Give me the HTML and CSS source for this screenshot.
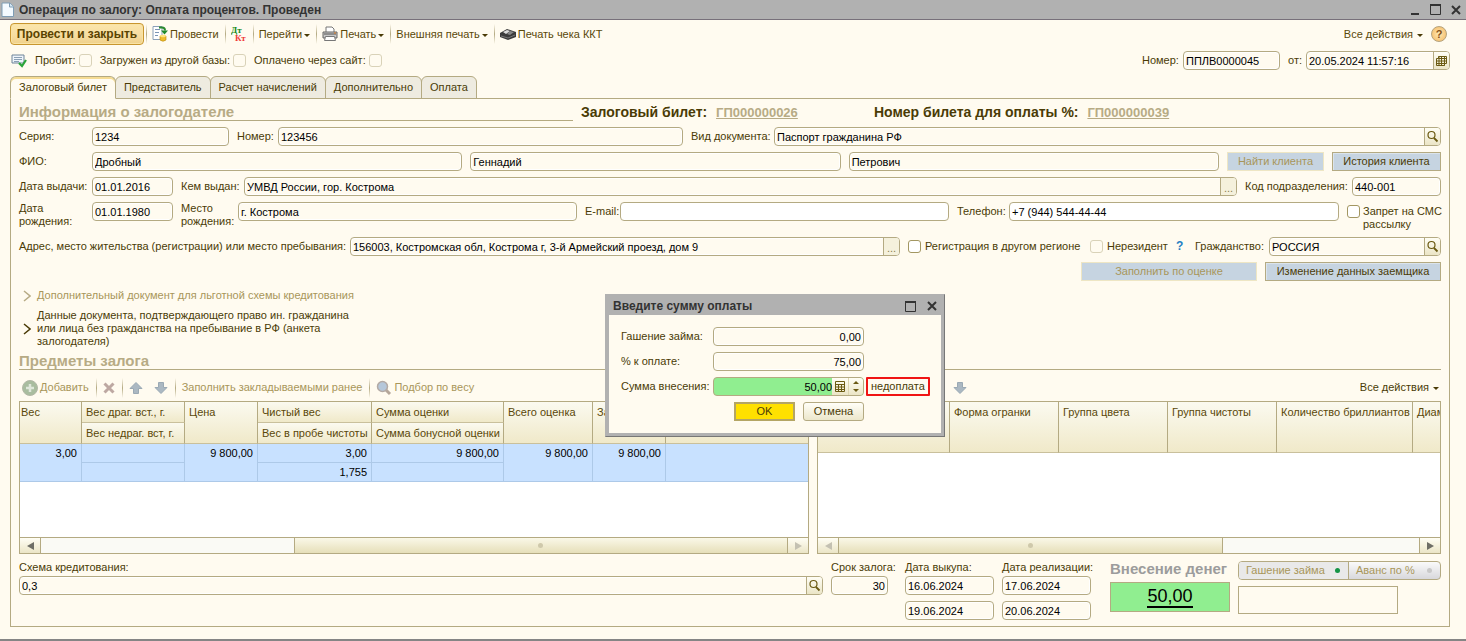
FILE: index.html
```html
<!DOCTYPE html>
<html lang="ru">
<head>
<meta charset="utf-8">
<title>Операция по залогу</title>
<link rel="stylesheet" href="styles.css">
</head>
<body>
<svg class="defs" aria-hidden="true">
  <symbol id="i-lens" viewBox="0 0 13 13"><circle cx="5.500" cy="5" r="3.500" fill="none" stroke="#6b5a12" stroke-width="1.200"/><path d="M8 8l3.500 3.500" stroke="#6b5a12" stroke-width="1.800"/></symbol>
  <symbol id="i-down" viewBox="0 0 14 14"><path d="M4.500 1.500h5v5h3.500L7 12.500 1 6.500h3.500z" fill="#abb8c2" stroke="#9aa9b4"/></symbol>
  <symbol id="i-close" viewBox="0 0 10 10"><path d="M1 1l8 8M9 1L1 9" stroke="#333" stroke-width="2"/></symbol>
  <symbol id="i-max" viewBox="0 0 11 11"><path d="M.5 1h10v9.500H.5z" fill="none" stroke="#333"/><path d="M0 1h11" stroke="#333" stroke-width="2"/></symbol>
</svg>
<div class="window">
  <header class="titlebar">
    <svg width="13" height="15" viewBox="0 0 13 15"><path d="M1 1h8l3.500 3.500V14.500H1z" fill="#f4faff" stroke="#7f9db5"/><path d="M8.500 1v4h4" fill="#d5e6f2" stroke="#7f9db5"/></svg>
    <h1>Операция по залогу: Оплата процентов. Проведен</h1>
    <div class="winbuttons">
      <button aria-label="Свернуть"><svg width="9" height="10"><path d="M0 9h8" stroke="#333" stroke-width="2"/></svg></button>
      <button aria-label="Развернуть"><svg width="11" height="11"><use href="#i-max"/></svg></button>
      <button aria-label="Закрыть"><svg width="10" height="10"><use href="#i-close"/></svg></button>
    </div>
  </header>

  <div class="toolbar">
    <button class="primary">Провести и закрыть</button>
    <i class="sep"></i>
    <button class="tool"><svg width="16" height="16" viewBox="0 0 16 16"><path d="M1 .5h9v13H1z" fill="#fff" stroke="#8aa0b8"/><path d="M3 3.500h5M3 6.500h4M3 9.500h3" stroke="#7a94b4"/><path d="M7 1.500h3q3 0 3 3" fill="none" stroke="#2b8a2f" stroke-width="2"/><path d="M9 4.500h7l-3.500 4z" fill="#1f8a2b"/><path d="M8 10v4q3 2.500 6 0v-4z" fill="#eebd2c" stroke="#b8870b" stroke-width=".6"/><ellipse cx="11" cy="10" rx="3" ry="1.200" fill="#ffe27a"/></svg>Провести</button>
    <i class="sep"></i>
    <button class="tool" aria-label="Движения документа"><svg width="16" height="16" viewBox="0 0 16 16"><text x="0" y="7" class="dt">Дт</text><text x="4" y="15" class="kt">Кт</text></svg></button>
    <i class="sep"></i>
    <button class="tool">Перейти<i class="caret"></i></button>
    <i class="sep"></i>
    <button class="tool"><svg width="16" height="16" viewBox="0 0 16 16"><path d="M4 6V1h6l2 2v3" fill="#fff" stroke="#777"/><path d="M1 6h14v6H1z" fill="#c8c8c8" stroke="#666"/><path d="M2 8h12" stroke="#555"/><path d="M3.500 10.500h9l1 4h-11z" fill="#fff" stroke="#777"/><path d="M12 7h2" stroke="#e07a20"/></svg>Печать<i class="caret"></i></button>
    <i class="sep"></i>
    <button class="tool">Внешняя печать<i class="caret"></i></button>
    <i class="sep"></i>
    <button class="tool"><svg width="16" height="16" viewBox="0 0 16 16"><path d="M0 7l7-4 9 3v5l-8 3-8-3z" fill="#3b3b3b"/><path d="M3 6l4-2 3 1-4 3z" fill="#ddd"/><path d="M10 5l4 1-4 3-3-1z" fill="#888"/><path d="M1 10l7 2 7-3" stroke="#777" fill="none"/></svg>Печать чека ККТ</button>
    <div class="end">
      <button class="tool">Все действия<i class="caret"></i></button>
      <button class="help" aria-label="Справка">?</button>
    </div>
  </div>

  <div class="statusrow">
    <svg width="16" height="14" viewBox="0 0 16 14"><path d="M1 1h12v8H1z" fill="#eef4fa" stroke="#6f8499"/><path d="M3 3.500h8M3 5.500h8M3 7.500h5" stroke="#8ba0b5"/><path d="M8 9l3 3 4-6" fill="none" stroke="#2ba53a" stroke-width="2.200"/></svg>
    <label>Пробит: <input type="checkbox" disabled></label>
    <label>Загружен из другой базы: <input type="checkbox" disabled></label>
    <label>Оплачено через сайт: <input type="checkbox" disabled></label>
    <div class="end">
      <label for="docnum" class="w-docnum">Номер:</label><input class="box w-num" id="docnum" value="ППЛВ0000045">
      <label for="docdate" class="w-from">от:</label>
      <span class="box combo w-date"><input id="docdate" value="20.05.2024 11:57:16"><button aria-label="Календарь"><svg width="11" height="12" viewBox="0 0 11 12"><path d="M2.500 1.500h8v7h-2v2h-8v-7h2zM.5 6h10M.5 8.500h8M3 1.500v9M5.500 1.500v9M8.500 1.500v9M2.500 3.500h8" fill="none" stroke="#6b5a12"/></svg></button></span>
    </div>
  </div>

  <nav class="tabs" role="tablist">
    <button role="tab" class="on" aria-selected="true">Залоговый билет</button>
    <button role="tab">Представитель</button>
    <button role="tab">Расчет начислений</button>
    <button role="tab">Дополнительно</button>
    <button role="tab">Оплата</button>
  </nav>

  <main class="panel">
    <div class="heads">
      <h2 class="section">Информация о залогодателе</h2>
      <p class="ticket">Залоговый билет: <a href="#t26">ГП000000026</a></p>
      <p class="ticket pay">Номер билета для оплаты %: <a href="#t39">ГП000000039</a></p>
    </div>

    <div class="form">
      <div class="row">
        <div class="pair"><label for="f1" class="l-first">Серия:</label><input id="f1" class="box w-series" value="1234"></div>
        <div class="pair g5"><label for="f2" class="l-num">Номер:</label><input id="f2" class="box" value="123456"></div>
        <div class="pair g8"><label for="f3" class="l-kind">Вид документа:</label><span class="box combo"><input id="f3" value="Паспорт гражданина РФ"><button aria-label="Выбрать"><svg width="13" height="13"><use href="#i-lens"/></svg></button></span></div>
      </div>
      <div class="row">
        <div class="pair grow"><label for="f4" class="l-first">ФИО:</label><div class="trio"><input id="f4" class="box" value="Дробный"><input class="box" aria-label="Имя" value="Геннадий"><input class="box" aria-label="Отчество" value="Петрович"></div></div>
        <button class="flat w-find" disabled>Найти клиента</button>
        <button class="flat w-hist">История клиента</button>
      </div>
      <div class="row">
        <div class="pair"><label for="f5" class="l-first">Дата выдачи:</label><input id="f5" class="box w-day" value="01.01.2016"></div>
        <div class="pair grow"><label for="f6" class="l-issued">Кем выдан:</label><span class="box combo"><input id="f6" value="УМВД России, гор. Кострома"><button class="dots" aria-label="Выбрать">...</button></span></div>
        <div class="pair"><label for="f7" class="l-code">Код подразделения:</label><input id="f7" class="box w-code" value="440-001"></div>
      </div>
      <div class="row two">
        <div class="pair"><label for="f8" class="l-first">Дата<br>рождения:</label><input id="f8" class="box w-day" value="01.01.1980"></div>
        <div class="pair g4"><label for="f9" class="l-place">Место<br>рождения:</label><input id="f9" class="box" value="г. Кострома"></div>
        <div class="pair g4"><label for="f10" class="l-mail">E-mail:</label><input id="f10" class="box white" type="email"></div>
        <div class="pair g4"><label for="f11" class="l-phone">Телефон:</label><input id="f11" class="box white" type="tel" value="+7 (944) 544-44-44"></div>
        <label class="sms"><input type="checkbox"><span>Запрет на СМС<br>рассылку</span></label>
      </div>
      <div class="row">
        <div class="pair grow"><label for="f12" class="l-addr">Адрес, место жительства (регистрации) или место пребывания:</label><span class="box combo"><input id="f12" value="156003, Костромская обл, Кострома г, 3-й Армейский проезд, дом 9"><button class="dots" aria-label="Выбрать">...</button></span></div>
        <label class="check w-region"><input type="checkbox">Регистрация в другом регионе</label>
        <label class="check w-nonres"><input type="checkbox" disabled>Нерезидент</label>
        <a class="hint" href="#hint">?</a>
        <div class="pair"><label for="f13" class="l-land">Гражданство:</label><span class="box combo w-land"><input id="f13" value="РОССИЯ"><button aria-label="Выбрать"><svg width="13" height="13"><use href="#i-lens"/></svg></button></span></div>
      </div>
      <div class="row right">
        <button class="flat w-wide" disabled>Заполнить по оценке</button>
        <button class="flat w-wide">Изменение данных заемщика</button>
      </div>
    </div>

    <button class="fold off"><svg width="8" height="12"><path d="M1 1l6 5-6 5" fill="none" stroke="#b7ab85" stroke-width="1.500"/></svg><span>Дополнительный документ для льготной схемы кредитования</span></button>
    <button class="fold"><svg width="8" height="12"><path d="M1 1l6 5-6 5" fill="none" stroke="#4a3b06" stroke-width="1.500"/></svg><span>Данные документа, подтверждающего право ин. гражданина или лица без гражданства на пребывание в РФ (анкета залогодателя)</span></button>

    <div class="lists">
      <section class="list">
        <h2 class="section">Предметы залога</h2>
        <div class="minibar">
          <button class="tool off"><svg width="16" height="16" viewBox="0 0 16 16"><circle cx="8" cy="8" r="7.500" fill="#a9bd9f" stroke="#b3b8a6"/><path d="M8 4v8M4 8h8" stroke="#dfe7da" stroke-width="2.500"/></svg>Добавить</button>
          <i class="sep"></i>
          <button class="tool off" aria-label="Удалить"><svg width="12" height="12" viewBox="0 0 12 12"><path d="M1.500 1.500l9 9M10.500 1.500l-9 9" stroke="#bda8a2" stroke-width="3"/></svg></button>
          <i class="sep"></i>
          <button class="tool off" aria-label="Вверх"><svg class="flip" width="14" height="14"><use href="#i-down"/></svg></button>
          <button class="tool off down" aria-label="Вниз"><svg width="14" height="14"><use href="#i-down"/></svg></button>
          <i class="sep"></i>
          <button class="tool off">Заполнить закладываемыми ранее</button>
          <i class="sep"></i>
          <button class="tool off"><svg width="16" height="16" viewBox="0 0 16 16"><path d="M9 9l5 5" stroke="#b5a79a" stroke-width="3"/><circle cx="6.500" cy="6.500" r="5" fill="#b5c7da" stroke="#b3aaa5" stroke-width="1.500"/></svg>Подбор по весу</button>
        </div>
        <div class="grid">
          <div class="scroll">
            <table class="items">
              <colgroup><col class="c1"><col class="c2"><col class="c3"><col class="c4"><col class="c5"><col class="c6"><col class="c3"><col></colgroup>
              <thead>
                <tr><th rowspan="2" class="first">Вес</th><th>Вес драг. вст., г.</th><th rowspan="2">Цена</th><th>Чистый вес</th><th>Сумма оценки</th><th rowspan="2">Всего оценка</th><th rowspan="2">Займ</th><th rowspan="2"></th></tr>
                <tr><th>Вес недраг. вст, г.</th><th>Вес в пробе чистоты</th><th>Сумма бонусной оценки</th></tr>
              </thead>
              <tbody>
                <tr><td rowspan="2">3,00</td><td></td><td rowspan="2">9 800,00</td><td>3,00</td><td>9 800,00</td><td rowspan="2">9 800,00</td><td rowspan="2">9 800,00</td><td rowspan="2"></td></tr>
                <tr><td></td><td>1,755</td><td></td></tr>
              </tbody>
            </table>
          </div>
          <div class="bar">
            <button aria-label="Влево"><i class="arr left"></i></button><span class="t1"></span><span class="thumb h1"><i></i></span><button aria-label="Вправо"><i class="arr rt pale"></i></button>
          </div>
        </div>
      </section>
      <section class="list second">
        <h2 class="section"></h2>
        <div class="minibar">
          <button class="tool off moved" aria-label="Вниз"><svg width="14" height="14"><use href="#i-down"/></svg></button>
          <div class="end"><button class="tool">Все действия<i class="caret"></i></button></div>
        </div>
        <div class="grid">
          <div class="scroll">
            <table class="stones">
              <colgroup><col class="d1"><col class="d2"><col class="d2"><col class="d2"><col class="d3"><col></colgroup>
              <thead><tr><th></th><th>Форма огранки</th><th>Группа цвета</th><th>Группа чистоты</th><th>Количество бриллиантов</th><th>Диам</th></tr></thead>
            </table>
          </div>
          <div class="bar">
            <button aria-label="Влево"><i class="arr left pale"></i></button><span class="thumb h2"><i></i></span><span class="t2"></span><button aria-label="Вправо"><i class="arr rt"></i></button>
          </div>
        </div>
      </section>
    </div>

    <div class="bottom">
      <div class="col grow"><label for="b1">Схема кредитования:</label><span class="box combo"><input id="b1" value="0,3"><button aria-label="Выбрать"><svg width="13" height="13"><use href="#i-lens"/></svg></button></span></div>
      <div class="col term"><label for="b2">Срок залога:</label><input id="b2" class="box num" value="30"></div>
      <div class="col date"><label for="b3">Дата выкупа:</label><input id="b3" class="box" value="16.06.2024"><input class="box next" aria-label="Дата выкупа, вторая" value="19.06.2024"></div>
      <div class="col date"><label for="b4">Дата реализации:</label><input id="b4" class="box" value="17.06.2024"><input class="box next" aria-label="Дата реализации, вторая" value="20.06.2024"></div>
      <div class="col paid"><h3>Внесение денег</h3><output><span>50,00</span></output></div>
      <div class="col modes">
        <div class="toggle"><button class="sel">Гашение займа<i></i></button><button>Аванс по %<i></i></button></div>
        <textarea aria-label="Комментарий"></textarea>
      </div>
    </div>
  </main>

  <div class="dialog" role="dialog" aria-labelledby="dt">
    <div class="dhead"><h2 id="dt">Введите сумму оплаты</h2>
      <button aria-label="Развернуть"><svg width="11" height="11"><use href="#i-max"/></svg></button>
      <button aria-label="Закрыть"><svg width="10" height="10"><use href="#i-close"/></svg></button></div>
    <div class="dbody">
      <div class="drow"><label for="d1">Гашение займа:</label><input id="d1" class="box num" value="0,00"></div>
      <div class="drow"><label for="d2">% к оплате:</label><input id="d2" class="box num" value="75,00"></div>
      <div class="drow"><label for="d3">Сумма внесения:</label><span class="box combo sum"><input id="d3" class="num" value="50,00"><button aria-label="Калькулятор"><svg width="10" height="11" viewBox="0 0 10 11"><path d="M.5.5h9v10h-9zM.5 3.500h9M.5 6h9M.5 8.500h9M3.500 3.500v7M6.500 3.500v7" fill="none" stroke="#6b5a12"/></svg></button><button class="spin" aria-label="Изменить"><i class="up"></i><i class="dn"></i></button></span><span class="under">недоплата</span></div>
      <div class="dacts"><button class="ok">OK</button><button class="cancel">Отмена</button></div>
    </div>
  </div>
</div>
</body>
</html>
```
FILE: styles.css
```css
* { box-sizing: border-box; }
body { margin: 0; background: #fffbf0; color: #4a3b06; font: 11px/13px "Liberation Sans", Arial, sans-serif; }
button, input, textarea { font: inherit; color: inherit; margin: 0; padding: 0; }
button { background: none; border: 0; white-space: nowrap; }
h1, h2, h3, p { margin: 0; }
svg { display: block; flex: none; }
label { white-space: nowrap; flex: none; }
.defs { position: absolute; width: 0; height: 0; }
.grow { flex: 1; min-width: 0; }
.end { margin-left: auto; display: flex; align-items: center; }

.window { position: relative; min-height: 100vh; display: flex; flex-direction: column; border-bottom: 2px solid #858585; padding-bottom: 12px; }
.titlebar { height: 20px; display: flex; align-items: center; gap: 5px; padding: 0 5px 0 1px; background: #b1b1b1; border-bottom: 1px solid #77707a; color: #333; }
.titlebar h1 { font-size: 12px; line-height: 16px; }
.winbuttons { margin-left: auto; display: flex; gap: 10px; }

.toolbar { display: flex; align-items: center; height: 28px; padding: 0 19px 0 10px; color: #5a4809; }
.primary { width: 134px; height: 22px; border: 1px solid #c8962f; border-radius: 4px; background: linear-gradient(#fbe6ac, #f6dda0 60%, #efd08a); color: #5a4300; font-weight: bold; font-size: 12px; box-shadow: inset 0 0 0 1px #f9e3a4; }
.sep { width: 1px; height: 20px; margin: 0 6px 0 2px; background: linear-gradient(#fffbf0, #b4aa82, #fffbf0); }
.toolbar > .sep { margin: 0 5px 0 2px; }
.tool { display: flex; align-items: center; gap: 2px; padding-right: 4px; }
.tool .caret { margin-top: 2px; }
.end .caret { margin-left: 2px; }
.caret { border: 3px solid transparent; border-top-color: #4a3b06; border-bottom: 0; }
.tool.off { color: #a8965a; }
.dt, .kt { font: bold 9px "Liberation Serif", serif; fill: #178a1c; }
.kt { fill: #f03a3a; }
.help { width: 16px; height: 16px; margin-left: 4px; border: 1px solid #b5a27c; border-radius: 50%; background: radial-gradient(#ffe9b5, #f3b65f); font-weight: bold; color: #855016; }

.statusrow { display: flex; align-items: center; height: 25px; padding: 0 16px 0 11px; gap: 8px; }
.statusrow > label { display: flex; align-items: center; gap: 3px; }
.w-docnum { width: 41px; }
.w-num { width: 97px; }
.w-from { width: 18px; margin-left: 8px; }
.w-date { width: 144px; }
input[type=checkbox] { appearance: none; width: 13px; height: 13px; border: 1px solid #a39762; border-radius: 3px; background: #fff; flex: none; }
input[type=checkbox]:disabled { border-color: #d9d2b8; background: #fffbf0; }

.tabs { display: flex; padding: 0 10px; margin: 3px 0 -1px; }
.tabs button { height: 23px; padding: 0 8px; margin-right: -1px; border: 1px solid #b4aa82; border-radius: 6px 6px 0 0; background: #eeebe0; }
.tabs .on { background: #fffbf0; border-bottom-color: #fffbf0; box-shadow: inset 0 2px #f6dc93; position: relative; }
.panel { flex: 1; display: flex; flex-direction: column; margin: 0 16px 0 10px; padding: 0 8px 6px; border: 1px solid #b4aa82; }
.heads { display: flex; gap: 8px; height: 28px; align-items: flex-start; padding-top: 4px; }
.section { flex: 1; height: 18px; border-bottom: 1px solid #b4aa82; color: #b7ab85; font-size: 15px; line-height: 18px; }
.ticket { width: 285px; font-size: 14px; line-height: 19px; font-weight: bold; }
.ticket.pay { width: 567px; }
.ticket a { margin-left: 5px; font-size: 13px; color: #b7ab85; }

.form { display: flex; flex-direction: column; gap: 6px; }
.row { display: flex; gap: 8px; min-height: 19px; align-items: center; }
.row.two { align-items: flex-start; min-height: 29px; }
.row.two .pair { align-items: flex-start; }
.row.right { justify-content: flex-end; }
.pair { display: flex; align-items: center; min-width: 0; }
.pair > .box { min-width: 0; }
.g5 { flex: 446 1 0; }
.g8 { flex: 750 1 0; }
.g4 { flex: 1; }
.g4 > .box, .g5 > .box, .g8 > .box, .grow > .box { flex: 1; }
.two .g4:nth-child(2) { flex: 396 1 0; }
.two .g4:nth-child(3) { flex: 364 1 0; }
.two .g4:nth-child(4) { flex: 382 1 0; }
.l-first { width: 73px; }
.l-num { width: 41px; }
.l-kind { width: 83px; }
.l-issued { width: 63px; }
.l-code { width: 107px; }
.l-place { width: 57px; }
.l-mail { width: 35px; line-height: 19px; }
.l-phone { width: 52px; line-height: 19px; }
.l-addr { width: 331px; }
.l-land { width: 74px; }
.w-series { width: 137px; }
.w-day { width: 81px; }
.w-code { width: 89px; }
.w-land { width: 172px; }
.trio { flex: 1; display: flex; gap: 8px; }
.trio .box { flex: 1; min-width: 0; }
.sms { display: flex; gap: 3px; width: 94px; }
.sms input { margin-top: 3px; }
.sms span { padding-top: 3px; }
.check { display: flex; align-items: center; gap: 4px; }
.w-region { width: 174px; }
.w-nonres { width: 78px; }
.hint { width: 11px; color: #1f7fc4; font-size: 12px; font-weight: bold; text-decoration: none; }

.box { height: 19px; padding: 0 2px; border: 1px solid #b4aa82; border-radius: 4px; background: #fffbf0; box-shadow: inset 0 0 0 1px #fff; color: #000; }
.box.white { background: #fff; }
.num { text-align: right; }
.combo { display: flex; overflow: hidden; padding: 0 0 0 2px; }
.combo input { flex: 1; min-width: 0; width: 0; padding-top: 1px; border: 0; background: none; outline: 0; }
.combo button { width: 16px; border-left: 1px solid #b4aa82; background: linear-gradient(#fffef5, #ebe5c6); display: flex; align-items: center; justify-content: center; }
.combo .dots { align-items: flex-end; color: #8c8050; background: #f5f1dc; }
.flat { height: 19px; border: 1px solid #b4aa82; background: #c6d4e1; box-shadow: inset 1px 1px #dbe4ec; color: #4a3b06; }
.flat:disabled { color: #a8965a; border-color: #eee6c4; box-shadow: none; }
.w-find { width: 97px; }
.w-hist { width: 109px; }
.w-wide { width: 176px; }

.fold { display: flex; align-items: center; gap: 6px; width: 350px; padding-left: 4px; margin-top: 8px; text-align: left; white-space: normal; }
.fold + .fold { margin-top: 7px; }
.fold.off { color: #a8965a; }
.fold span { width: 332px; }

.lists { flex: 1; display: flex; gap: 8px; margin-top: 4px; }
.list { flex: 790 1 0; min-width: 0; display: flex; flex-direction: column; }
.list .section { flex: none; }
.second { flex-grow: 624; }
.minibar { display: flex; align-items: center; height: 31px; padding: 4px 0 0 3px; }
.minibar .sep { margin: 0 6px 0 1px; }
.minibar .tool { padding-right: 6px; }
.minibar .down { margin-left: 5px; }
.minibar .end .tool { padding-right: 2px; }
.flip { transform: scaleY(-1); }
.moved { margin-left: 133px; }
.grid { flex: 1; display: flex; flex-direction: column; min-height: 152px; border: 1px solid #b4aa82; background: #fff; }
.scroll { flex: 1; overflow: hidden; }
table { width: 100%; table-layout: fixed; border-collapse: separate; border-spacing: 0; }
.c1 { width: 62px; }
.c2 { width: 103px; }
.c3 { width: 73px; }
.c4 { width: 114px; }
.c5 { width: 132px; }
.c6 { width: 89px; }
.d1 { width: 132px; }
.d2 { width: 109px; }
.d3 { width: 136px; }
th, td { height: 21px; padding: 4px 4px 3px; white-space: nowrap; overflow: hidden; vertical-align: top; border-right: 1px solid #b4aa82; border-bottom: 1px solid #c9c09c; }
th { text-align: left; font-weight: normal; background: linear-gradient(#fbfaf0, #f0e9c9); color: #5a4809; }
th.first { padding-left: 1px; }
th:last-child[rowspan], td:last-child[rowspan], .stones th:last-child { border-right: 0; }
td { height: 19px; padding: 3px 4px 2px; text-align: right; color: #000; background: #c8e1ff; border-color: #adc9e8; }
.stones th { height: 51px; }
.stones th:last-child { padding-right: 0; }
.bar { display: flex; height: 16px; border-top: 1px solid #b4aa82; background: #fafaf5; }
.bar button { width: 21px; display: flex; align-items: center; justify-content: center; background: linear-gradient(#fffef5, #ebe5c6); }
.bar button:first-child { border-right: 1px solid #b4aa82; }
.bar button:last-child { border-left: 1px solid #b4aa82; }
.thumb { display: flex; align-items: center; justify-content: center; background: linear-gradient(#faf8e8, #e6dfb9); }
.thumb i { width: 5px; height: 5px; border-radius: 50%; background: #cfc9ab; }
.t1 { flex: 253; border-right: 1px solid #b4aa82; }
.h1 { flex: 493; }
.h2 { flex: 384; border-right: 1px solid #b4aa82; }
.t2 { flex: 197; }
.arr { border: 4px solid transparent; }
.arr.left { border-left: 0; border-right: 7px solid #6e6e66; }
.arr.rt { border-right: 0; border-left: 7px solid #6e6e66; }
.arr.left.pale { border-right-color: #c4c1b2; }
.arr.rt.pale { border-left-color: #c4c1b2; }

.bottom { display: flex; gap: 8px; padding-top: 7px; }
.col { display: flex; flex-direction: column; gap: 2px; }
.col > .box { flex: none; }
.col .next { margin-top: 4px; }
.term { width: 66px; }
.term .box { width: 57px; }
.date { width: 89px; }
.date .box { width: 89px; }
.paid { width: 120px; margin-left: 11px; gap: 5px; }
.paid h3 { color: #9c9c9c; font-size: 15px; line-height: 16px; white-space: nowrap; }
.paid output { height: 30px; display: flex; align-items: center; justify-content: center; border: 1px solid #b4aa82; background: #90ee90; color: #000; font-size: 18px; }
.paid span { line-height: 20px; border-bottom: 2px solid #000; }
.modes { width: 203px; gap: 6px; }
.toggle { display: flex; height: 19px; border: 1px solid #b4aa82; border-radius: 4px; overflow: hidden; color: #a8965a; background: linear-gradient(#fafafa, #d8d8dc); }
.toggle button { flex: 1; display: flex; align-items: center; justify-content: space-between; padding: 0 8px 0 7px; }
.toggle .sel { flex: none; width: 110px; background: #e9e9e9; border-right: 1px solid #b4aa82; }
.toggle i { width: 5px; height: 5px; border-radius: 50%; background: #c9c9c9; }
.toggle .sel i { background: #159447; }
textarea { width: 160px; height: 28px; border: 1px solid #b4aa82; background: #fffbf0; resize: none; display: block; }

.dialog { position: absolute; left: 605px; top: 294px; width: 340px; background: #b1b1b1; border: 1px solid #b1b1b1; border-right-color: #777; border-bottom-color: #777; padding: 0 3px 3px; }
.dhead { height: 20px; display: flex; align-items: center; gap: 11px; padding: 2px 4px 0; color: #333; }
.dhead h2 { flex: 1; font-size: 12px; line-height: 14px; }
.dbody { background: #fffbf0; padding: 12px 9px 12px 12px; display: flex; flex-direction: column; gap: 6px; }
.drow { display: flex; align-items: center; height: 19px; }
.drow label { width: 92px; }
.drow .box { width: 151px; }
.drow .sum { background: #90ee90; box-shadow: none; padding: 0; }
.sum .spin { width: 15px; flex-direction: column; gap: 5px; }
.sum button { border-left: 0; }
.sum .spin { border-left: 1px solid #ddd5b0; }
.spin i { border: 3px solid transparent; }
.spin .up { border-bottom-color: #6b5a12; border-top: 0; }
.spin .dn { border-top-color: #6b5a12; border-bottom: 0; }
.under { height: 19px; margin-left: 2px; padding: 1px 3px; border: 2px solid #f01414; border-radius: 1px; white-space: nowrap; }
.dacts { display: flex; gap: 8px; padding-left: 113px; }
.dacts button { width: 61px; height: 19px; }
.ok { border: 2px solid #b4a564; background: #ffe000; }
.cancel { border: 1px solid #b4aa82; border-radius: 3px; background: linear-gradient(#fffef8, #ece7cb); }
```
